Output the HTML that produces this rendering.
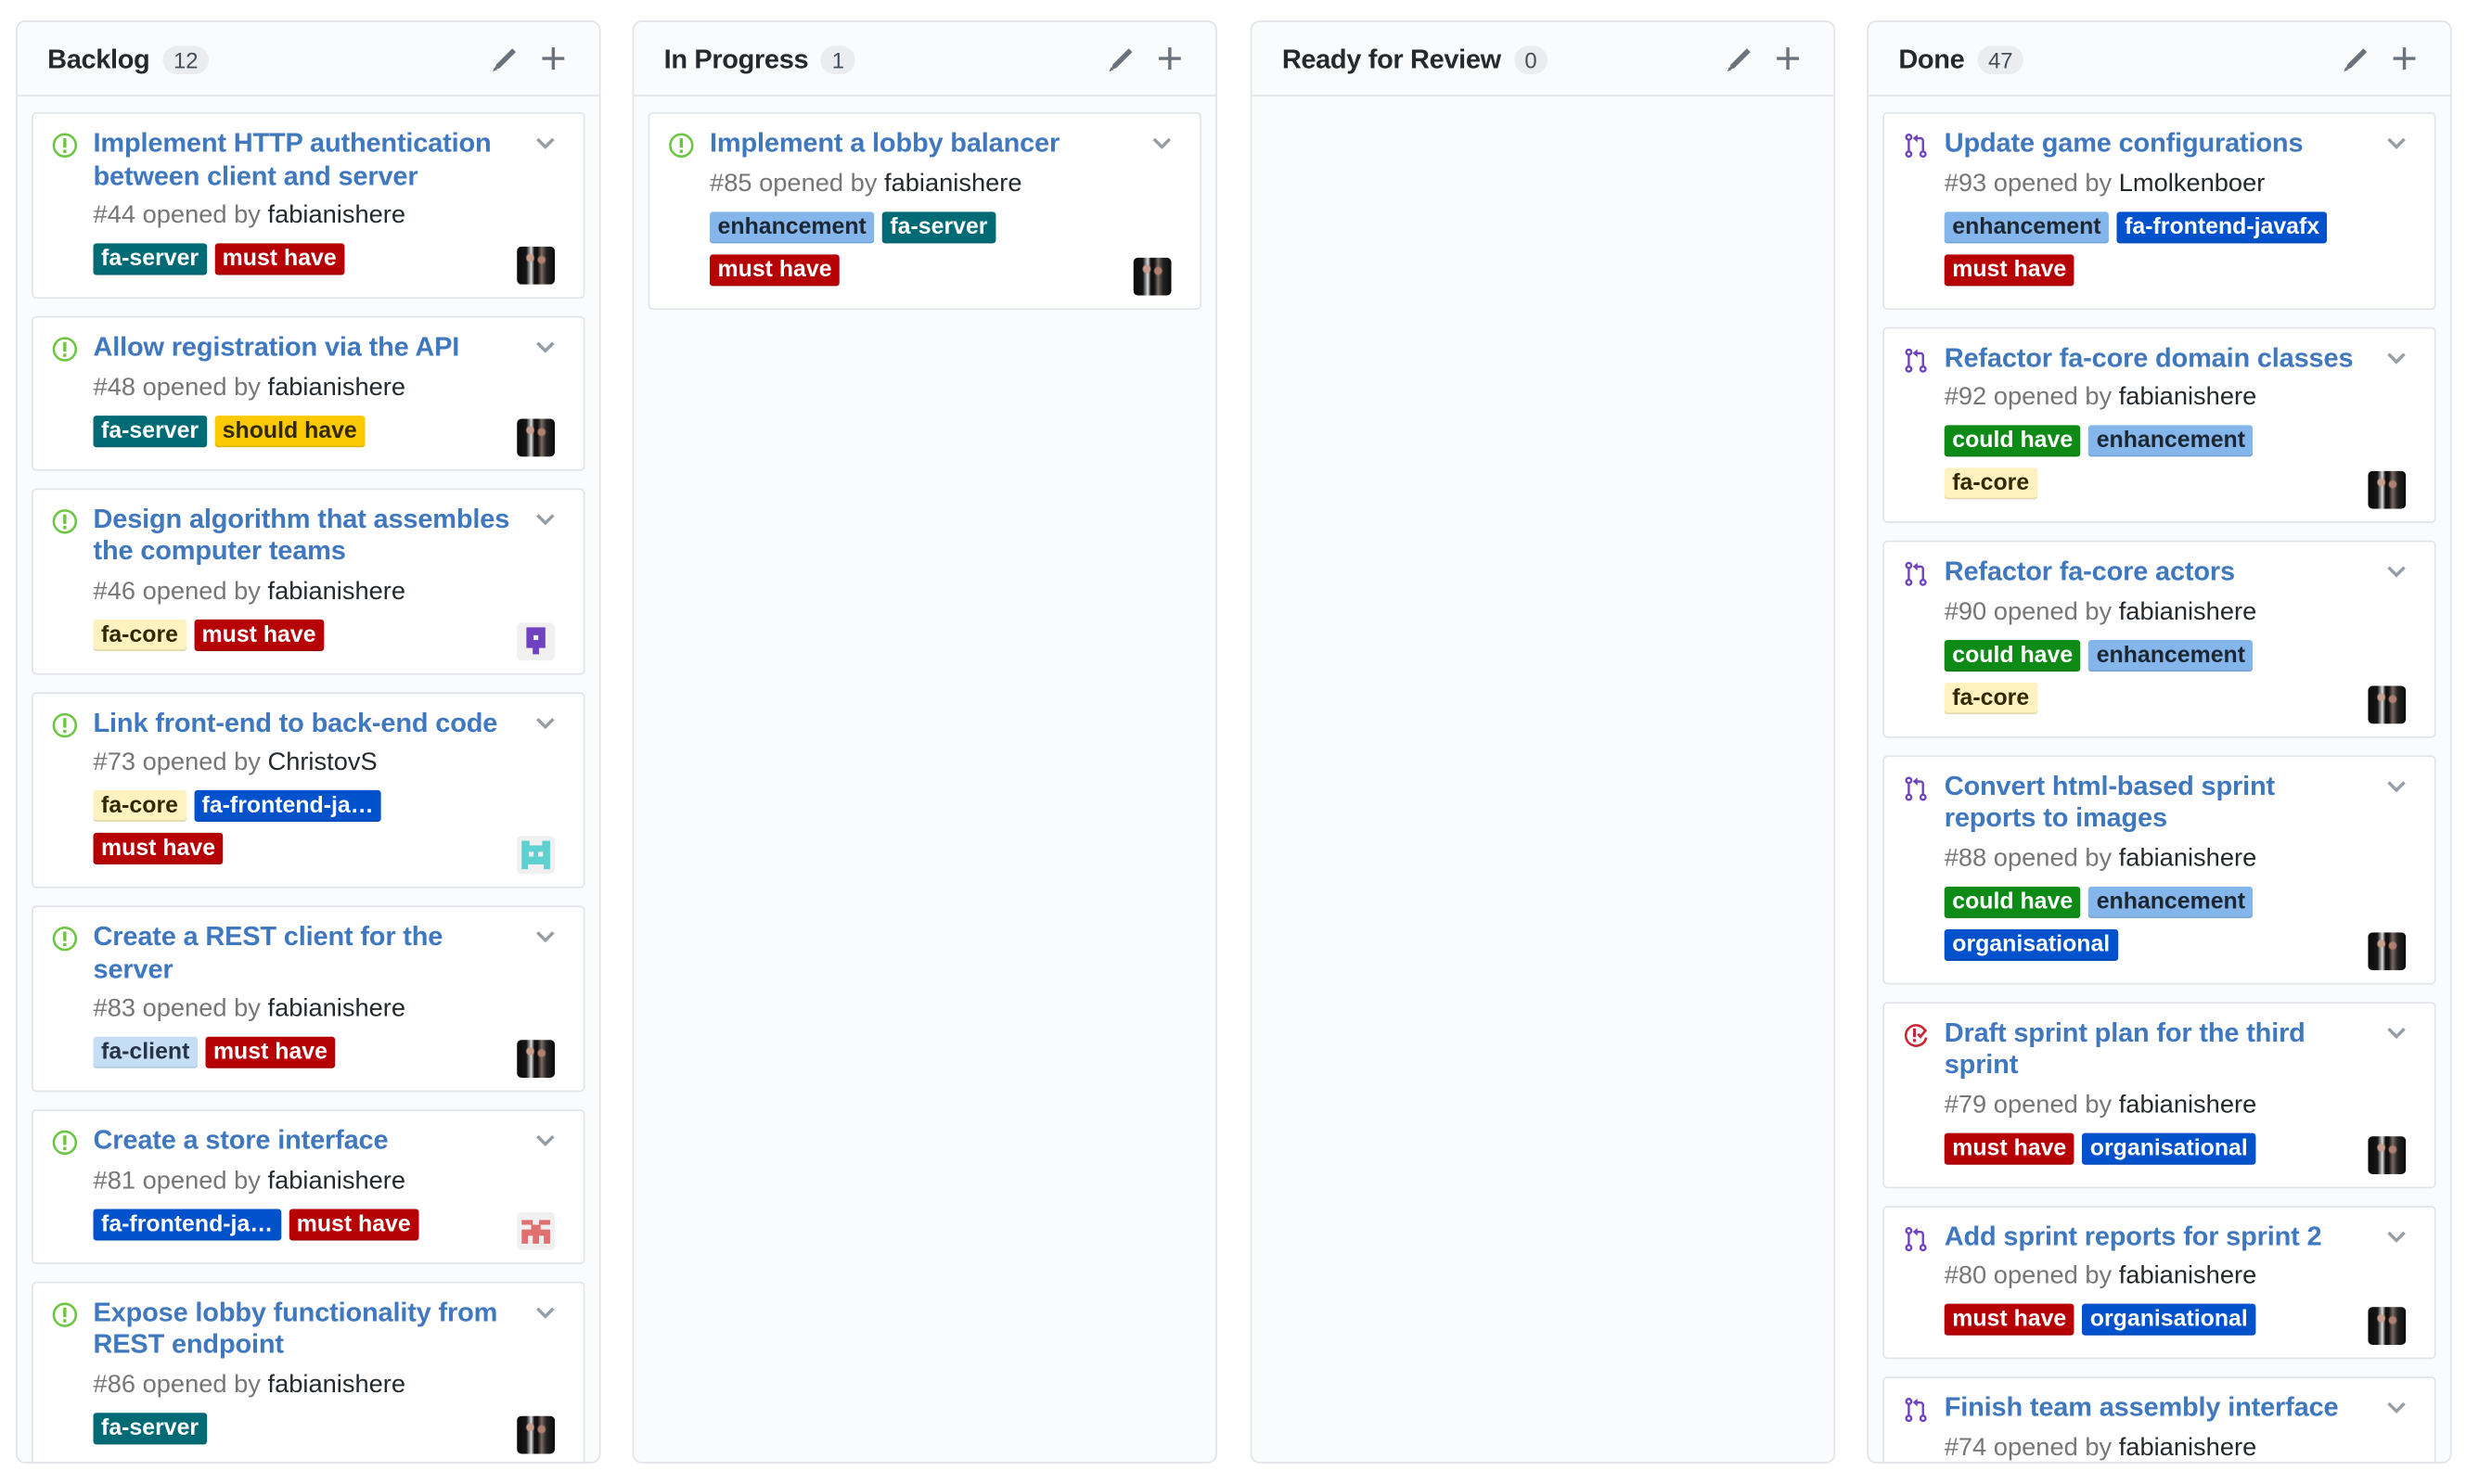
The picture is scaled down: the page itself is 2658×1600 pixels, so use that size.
<!DOCTYPE html>
<html><head><meta charset="utf-8">
<style>
html,body{margin:0;padding:0;background:#fff;width:2658px;height:1600px;overflow:hidden}
#w{position:absolute;left:0;top:0;width:1560px;height:939px;transform:scale(1.70385);transform-origin:0 0;font-family:"Liberation Sans",sans-serif}
.col{position:absolute;top:13px;width:368px;height:911px;background:#fafbfc;border:1px solid #e1e4e8;border-radius:6px;overflow:hidden}
.hd{height:46px;border-bottom:1px solid #e1e4e8;position:relative}
.hd .n{position:absolute;left:19px;top:14px;font-size:17px;font-weight:bold;color:#24292e;letter-spacing:-0.2px}
.cnt{display:inline-block;margin-left:8px;background:#eaecef;border-radius:10px;font-size:14px;font-weight:normal;color:#444d56;padding:1px 7px;vertical-align:0;letter-spacing:0}
.hd svg{position:absolute;top:15px}
.body{padding-top:10px}
.card{position:relative;margin:0 9px 11px 9px;padding:9px 10px 7px 38px;background:#fff;border:1px solid #e1e4e8;border-radius:3px}
.ic{position:absolute;left:12px;top:12px}
.chev{position:absolute;right:18px;top:15px}
.t{font-size:17px;font-weight:bold;color:#4078c0;line-height:20.5px;white-space:nowrap;letter-spacing:-0.1px}
.m{font-size:16px;color:#767676;line-height:24px;margin-top:3px;white-space:nowrap}
.m b{font-weight:normal;color:#24292e}
.l{margin-top:5px}
.r{display:flex;gap:5px;height:20px;margin-bottom:7px}
.lb{display:inline-block;height:20px;line-height:20px;padding:0 5px;font-size:14.6px;font-weight:bold;border-radius:2px;color:#fff;white-space:nowrap;box-shadow:inset 0 -1px 0 rgba(27,31,35,.12)}
.sv{background:#006b75}.mh{background:#b60205}.sh{background:#fbca04;color:#332900}
.co{background:#fef2c0;color:#332900}.fx{background:#0052cc}.en{background:#84b6eb;color:#1c2733}
.cl{background:#c5def5;color:#273445}.ch{background:#0e8a16}.or{background:#0052cc}
.av{position:absolute;right:18px;bottom:8px;width:24px;height:24px;border-radius:3px;overflow:hidden}
.ph{background:radial-gradient(circle at 35% 30%,#c9a090 0 2px,transparent 3px),radial-gradient(circle at 65% 35%,#b08070 0 2px,transparent 3px),linear-gradient(90deg,#0a0a0a 0,#151515 25%,#e0e0e0 38%,#111 46%,#111 55%,#7a6a60 65%,#222 78%,#0a0a0a 100%)}
.idc{background:#f0f0f0}
</style></head><body><div id="w">

<!-- COLUMN 1 -->
<div class="col" style="left:10px">
<div class="hd"><span class="n">Backlog<span class="cnt">12</span></span>
<svg style="left:299px" width="18" height="18" viewBox="0 0 16 16"><path fill="#6a737d" d="M12.5 1.5l2 2-9 9-3 1 1-3z M1.5 14.5l1-2.5 1.5 1.5z"/></svg>
<svg style="left:331px" width="16" height="16" viewBox="0 0 16 16"><path fill="#6a737d" d="M7 1h2v6h6v2H9v6H7V9H1V7h6z"/></svg></div>
<div class="body">

<div class="card"><svg class="ic" width="16" height="16" viewBox="0 0 16 16"><circle cx="8" cy="8" r="7" fill="none" stroke="#6cc644" stroke-width="1.5"/><path fill="#6cc644" d="M7 3.5h2v6H7zM7 10.8h2v2H7z"/></svg><svg class="chev" width="12" height="8" viewBox="0 0 12 8"><path d="M1 1l5 5 5-5" fill="none" stroke="#959da5" stroke-width="2"/></svg>
<div class="t">Implement HTTP authentication<br>between client and server</div><div class="m">#44 opened by <b>fabianishere</b></div>
<div class="l"><div class="r"><span class="lb sv">fa-server</span><span class="lb mh">must have</span></div></div><div class="av ph"></div></div>

<div class="card"><svg class="ic" width="16" height="16" viewBox="0 0 16 16"><circle cx="8" cy="8" r="7" fill="none" stroke="#6cc644" stroke-width="1.5"/><path fill="#6cc644" d="M7 3.5h2v6H7zM7 10.8h2v2H7z"/></svg><svg class="chev" width="12" height="8" viewBox="0 0 12 8"><path d="M1 1l5 5 5-5" fill="none" stroke="#959da5" stroke-width="2"/></svg>
<div class="t">Allow registration via the API</div><div class="m">#48 opened by <b>fabianishere</b></div>
<div class="l"><div class="r"><span class="lb sv">fa-server</span><span class="lb sh">should have</span></div></div><div class="av ph"></div></div>

<div class="card"><svg class="ic" width="16" height="16" viewBox="0 0 16 16"><circle cx="8" cy="8" r="7" fill="none" stroke="#6cc644" stroke-width="1.5"/><path fill="#6cc644" d="M7 3.5h2v6H7zM7 10.8h2v2H7z"/></svg><svg class="chev" width="12" height="8" viewBox="0 0 12 8"><path d="M1 1l5 5 5-5" fill="none" stroke="#959da5" stroke-width="2"/></svg>
<div class="t">Design algorithm that assembles<br>the computer teams</div><div class="m">#46 opened by <b>fabianishere</b></div>
<div class="l"><div class="r"><span class="lb co">fa-core</span><span class="lb mh">must have</span></div></div>
<div class="av idc"><svg width="24" height="24" viewBox="0 0 24 24"><path fill="#6f42c1" d="M6 3h12v13h-4v4h-4v-4H6z"/><rect x="10.5" y="8" width="3" height="3" fill="#f0f0f0"/></svg></div></div>

<div class="card"><svg class="ic" width="16" height="16" viewBox="0 0 16 16"><circle cx="8" cy="8" r="7" fill="none" stroke="#6cc644" stroke-width="1.5"/><path fill="#6cc644" d="M7 3.5h2v6H7zM7 10.8h2v2H7z"/></svg><svg class="chev" width="12" height="8" viewBox="0 0 12 8"><path d="M1 1l5 5 5-5" fill="none" stroke="#959da5" stroke-width="2"/></svg>
<div class="t">Link front-end to back-end code</div><div class="m">#73 opened by <b>ChristovS</b></div>
<div class="l"><div class="r"><span class="lb co">fa-core</span><span class="lb fx">fa-frontend-ja…</span></div><div class="r"><span class="lb mh">must have</span></div></div>
<div class="av idc"><svg width="24" height="24" viewBox="0 0 24 24"><path fill="#5fd0d0" d="M3 3h5v3h8V3h5v18h-4v-3H7v3H3z"/><rect x="7.5" y="10" width="3" height="3" fill="#f0f0f0"/><rect x="13.5" y="10" width="3" height="3" fill="#f0f0f0"/></svg></div></div>

<div class="card"><svg class="ic" width="16" height="16" viewBox="0 0 16 16"><circle cx="8" cy="8" r="7" fill="none" stroke="#6cc644" stroke-width="1.5"/><path fill="#6cc644" d="M7 3.5h2v6H7zM7 10.8h2v2H7z"/></svg><svg class="chev" width="12" height="8" viewBox="0 0 12 8"><path d="M1 1l5 5 5-5" fill="none" stroke="#959da5" stroke-width="2"/></svg>
<div class="t">Create a REST client for the<br>server</div><div class="m">#83 opened by <b>fabianishere</b></div>
<div class="l"><div class="r"><span class="lb cl">fa-client</span><span class="lb mh">must have</span></div></div><div class="av ph"></div></div>

<div class="card"><svg class="ic" width="16" height="16" viewBox="0 0 16 16"><circle cx="8" cy="8" r="7" fill="none" stroke="#6cc644" stroke-width="1.5"/><path fill="#6cc644" d="M7 3.5h2v6H7zM7 10.8h2v2H7z"/></svg><svg class="chev" width="12" height="8" viewBox="0 0 12 8"><path d="M1 1l5 5 5-5" fill="none" stroke="#959da5" stroke-width="2"/></svg>
<div class="t">Create a store interface</div><div class="m">#81 opened by <b>fabianishere</b></div>
<div class="l"><div class="r"><span class="lb fx">fa-frontend-ja…</span><span class="lb mh">must have</span></div></div>
<div class="av idc"><svg width="24" height="24" viewBox="0 0 24 24"><path fill="#e07070" d="M3 5h7v3H3zM14 5h7v3h-7zM9 8h6v3H9zM3 11h18v9h-4v-5h-3v5h-4v-5H7v5H3z"/></svg></div></div>

<div class="card"><svg class="ic" width="16" height="16" viewBox="0 0 16 16"><circle cx="8" cy="8" r="7" fill="none" stroke="#6cc644" stroke-width="1.5"/><path fill="#6cc644" d="M7 3.5h2v6H7zM7 10.8h2v2H7z"/></svg><svg class="chev" width="12" height="8" viewBox="0 0 12 8"><path d="M1 1l5 5 5-5" fill="none" stroke="#959da5" stroke-width="2"/></svg>
<div class="t">Expose lobby functionality from<br>REST endpoint</div><div class="m">#86 opened by <b>fabianishere</b></div>
<div class="l"><div class="r"><span class="lb sv">fa-server</span></div></div><div class="av ph"></div></div>
</div></div>

<!-- COLUMN 2 -->
<div class="col" style="left:400px">
<div class="hd"><span class="n">In Progress<span class="cnt">1</span></span>
<svg style="left:299px" width="18" height="18" viewBox="0 0 16 16"><path fill="#6a737d" d="M12.5 1.5l2 2-9 9-3 1 1-3z M1.5 14.5l1-2.5 1.5 1.5z"/></svg>
<svg style="left:331px" width="16" height="16" viewBox="0 0 16 16"><path fill="#6a737d" d="M7 1h2v6h6v2H9v6H7V9H1V7h6z"/></svg></div>
<div class="body">
<div class="card"><svg class="ic" width="16" height="16" viewBox="0 0 16 16"><circle cx="8" cy="8" r="7" fill="none" stroke="#6cc644" stroke-width="1.5"/><path fill="#6cc644" d="M7 3.5h2v6H7zM7 10.8h2v2H7z"/></svg><svg class="chev" width="12" height="8" viewBox="0 0 12 8"><path d="M1 1l5 5 5-5" fill="none" stroke="#959da5" stroke-width="2"/></svg>
<div class="t">Implement a lobby balancer</div><div class="m">#85 opened by <b>fabianishere</b></div>
<div class="l"><div class="r"><span class="lb en">enhancement</span><span class="lb sv">fa-server</span></div><div class="r"><span class="lb mh">must have</span></div></div><div class="av ph"></div></div>
</div></div>

<!-- COLUMN 3 -->
<div class="col" style="left:791px">
<div class="hd"><span class="n">Ready for Review<span class="cnt">0</span></span>
<svg style="left:299px" width="18" height="18" viewBox="0 0 16 16"><path fill="#6a737d" d="M12.5 1.5l2 2-9 9-3 1 1-3z M1.5 14.5l1-2.5 1.5 1.5z"/></svg>
<svg style="left:331px" width="16" height="16" viewBox="0 0 16 16"><path fill="#6a737d" d="M7 1h2v6h6v2H9v6H7V9H1V7h6z"/></svg></div>
</div>

<!-- COLUMN 4 -->
<div class="col" style="left:1181px">
<div class="hd"><span class="n">Done<span class="cnt">47</span></span>
<svg style="left:299px" width="18" height="18" viewBox="0 0 16 16"><path fill="#6a737d" d="M12.5 1.5l2 2-9 9-3 1 1-3z M1.5 14.5l1-2.5 1.5 1.5z"/></svg>
<svg style="left:331px" width="16" height="16" viewBox="0 0 16 16"><path fill="#6a737d" d="M7 1h2v6h6v2H9v6H7V9H1V7h6z"/></svg></div>
<div class="body">

<div class="card"><svg class="ic" width="16" height="16" viewBox="0 0 16 16"><g fill="none" stroke="#6f42c1" stroke-width="1.4"><circle cx="3.5" cy="13.5" r="1.6"/><circle cx="12.5" cy="13.5" r="1.6"/><circle cx="3.5" cy="2.8" r="1.6"/><path d="M3.5 4.4v7.5M12.5 11.9V5a1.5 1.5 0 0 0-1.5-1.5H8"/></g><path fill="#6f42c1" d="M9 1v5L6 3.5z"/></svg><svg class="chev" width="12" height="8" viewBox="0 0 12 8"><path d="M1 1l5 5 5-5" fill="none" stroke="#959da5" stroke-width="2"/></svg>
<div class="t">Update game configurations</div><div class="m">#93 opened by <b>Lmolkenboer</b></div>
<div class="l"><div class="r"><span class="lb en">enhancement</span><span class="lb fx">fa-frontend-javafx</span></div><div class="r"><span class="lb mh">must have</span></div></div></div>

<div class="card"><svg class="ic" width="16" height="16" viewBox="0 0 16 16"><g fill="none" stroke="#6f42c1" stroke-width="1.4"><circle cx="3.5" cy="13.5" r="1.6"/><circle cx="12.5" cy="13.5" r="1.6"/><circle cx="3.5" cy="2.8" r="1.6"/><path d="M3.5 4.4v7.5M12.5 11.9V5a1.5 1.5 0 0 0-1.5-1.5H8"/></g><path fill="#6f42c1" d="M9 1v5L6 3.5z"/></svg><svg class="chev" width="12" height="8" viewBox="0 0 12 8"><path d="M1 1l5 5 5-5" fill="none" stroke="#959da5" stroke-width="2"/></svg>
<div class="t">Refactor fa-core domain classes</div><div class="m">#92 opened by <b>fabianishere</b></div>
<div class="l"><div class="r"><span class="lb ch">could have</span><span class="lb en">enhancement</span></div><div class="r"><span class="lb co">fa-core</span></div></div><div class="av ph"></div></div>

<div class="card"><svg class="ic" width="16" height="16" viewBox="0 0 16 16"><g fill="none" stroke="#6f42c1" stroke-width="1.4"><circle cx="3.5" cy="13.5" r="1.6"/><circle cx="12.5" cy="13.5" r="1.6"/><circle cx="3.5" cy="2.8" r="1.6"/><path d="M3.5 4.4v7.5M12.5 11.9V5a1.5 1.5 0 0 0-1.5-1.5H8"/></g><path fill="#6f42c1" d="M9 1v5L6 3.5z"/></svg><svg class="chev" width="12" height="8" viewBox="0 0 12 8"><path d="M1 1l5 5 5-5" fill="none" stroke="#959da5" stroke-width="2"/></svg>
<div class="t">Refactor fa-core actors</div><div class="m">#90 opened by <b>fabianishere</b></div>
<div class="l"><div class="r"><span class="lb ch">could have</span><span class="lb en">enhancement</span></div><div class="r"><span class="lb co">fa-core</span></div></div><div class="av ph"></div></div>

<div class="card"><svg class="ic" width="16" height="16" viewBox="0 0 16 16"><g fill="none" stroke="#6f42c1" stroke-width="1.4"><circle cx="3.5" cy="13.5" r="1.6"/><circle cx="12.5" cy="13.5" r="1.6"/><circle cx="3.5" cy="2.8" r="1.6"/><path d="M3.5 4.4v7.5M12.5 11.9V5a1.5 1.5 0 0 0-1.5-1.5H8"/></g><path fill="#6f42c1" d="M9 1v5L6 3.5z"/></svg><svg class="chev" width="12" height="8" viewBox="0 0 12 8"><path d="M1 1l5 5 5-5" fill="none" stroke="#959da5" stroke-width="2"/></svg>
<div class="t">Convert html-based sprint<br>reports to images</div><div class="m">#88 opened by <b>fabianishere</b></div>
<div class="l"><div class="r"><span class="lb ch">could have</span><span class="lb en">enhancement</span></div><div class="r"><span class="lb or">organisational</span></div></div><div class="av ph"></div></div>

<div class="card"><svg class="ic" width="16" height="16" viewBox="0 0 16 16"><path d="M14.2 6A6.5 6.5 0 1 0 14.5 9.5" fill="none" stroke="#cb2431" stroke-width="1.5"/><path fill="#cb2431" d="M6.2 3.8h1.8v5.5H6.2zM6.2 10.5h1.8v1.8H6.2z"/><path d="M9.3 7.2l1.6 1.8 3.6-4.5" fill="none" stroke="#cb2431" stroke-width="1.6"/></svg><svg class="chev" width="12" height="8" viewBox="0 0 12 8"><path d="M1 1l5 5 5-5" fill="none" stroke="#959da5" stroke-width="2"/></svg>
<div class="t">Draft sprint plan for the third<br>sprint</div><div class="m">#79 opened by <b>fabianishere</b></div>
<div class="l"><div class="r"><span class="lb mh">must have</span><span class="lb or">organisational</span></div></div><div class="av ph"></div></div>

<div class="card"><svg class="ic" width="16" height="16" viewBox="0 0 16 16"><g fill="none" stroke="#6f42c1" stroke-width="1.4"><circle cx="3.5" cy="13.5" r="1.6"/><circle cx="12.5" cy="13.5" r="1.6"/><circle cx="3.5" cy="2.8" r="1.6"/><path d="M3.5 4.4v7.5M12.5 11.9V5a1.5 1.5 0 0 0-1.5-1.5H8"/></g><path fill="#6f42c1" d="M9 1v5L6 3.5z"/></svg><svg class="chev" width="12" height="8" viewBox="0 0 12 8"><path d="M1 1l5 5 5-5" fill="none" stroke="#959da5" stroke-width="2"/></svg>
<div class="t">Add sprint reports for sprint 2</div><div class="m">#80 opened by <b>fabianishere</b></div>
<div class="l"><div class="r"><span class="lb mh">must have</span><span class="lb or">organisational</span></div></div><div class="av ph"></div></div>

<div class="card"><svg class="ic" width="16" height="16" viewBox="0 0 16 16"><g fill="none" stroke="#6f42c1" stroke-width="1.4"><circle cx="3.5" cy="13.5" r="1.6"/><circle cx="12.5" cy="13.5" r="1.6"/><circle cx="3.5" cy="2.8" r="1.6"/><path d="M3.5 4.4v7.5M12.5 11.9V5a1.5 1.5 0 0 0-1.5-1.5H8"/></g><path fill="#6f42c1" d="M9 1v5L6 3.5z"/></svg><svg class="chev" width="12" height="8" viewBox="0 0 12 8"><path d="M1 1l5 5 5-5" fill="none" stroke="#959da5" stroke-width="2"/></svg>
<div class="t">Finish team assembly interface</div><div class="m">#74 opened by <b>fabianishere</b></div>
<div class="l"><div class="r"><span class="lb mh">must have</span></div></div><div class="av ph"></div></div>
</div></div>

</div></body></html>
